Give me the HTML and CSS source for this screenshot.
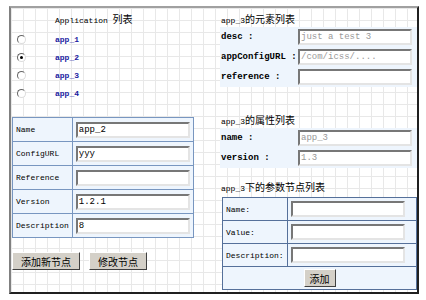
FILE: index.html
```html
<!DOCTYPE html>
<html>
<head>
    <meta charset="UTF-8">
    <title>Application 列表</title>
    <link rel="stylesheet" href="styles.css">
</head>
<body>
    <div class="frame">
        <div class="left">
            <table class="app-list">
                <tr><td class="radio-cell"></td><td class="caption">Application <span class="zh">列表</span></td></tr>
                <tr><td class="radio-cell"><span class="radio"></span></td><td><a class="app-link">app_1</a></td></tr>
                <tr><td class="radio-cell"><span class="radio checked"></span></td><td><a class="app-link">app_2</a></td></tr>
                <tr><td class="radio-cell"><span class="radio"></span></td><td><a class="app-link">app_3</a></td></tr>
                <tr><td class="radio-cell"><span class="radio"></span></td><td><a class="app-link">app_4</a></td></tr>
            </table>

            <table class="edit-table">
                <tr><td class="label">Name</td><td><input class="field" type="text" value="app_2"></td></tr>
                <tr><td class="label">ConfigURL</td><td><input class="field" type="text" value="yyy"></td></tr>
                <tr><td class="label">Reference</td><td><input class="field" type="text" value=""></td></tr>
                <tr><td class="label">Version</td><td><input class="field" type="text" value="1.2.1"></td></tr>
                <tr><td class="label">Description</td><td><input class="field" type="text" value="8"></td></tr>
            </table>

            <div class="buttons">
                <button class="btn wide">添加新节点</button>
                <button class="btn">修改节点</button>
            </div>
        </div>

        <div class="right">
            <div class="title">app_3<span class="zh">的元素列表</span></div>
            <div class="prop-list">
                <div class="prop-row"><span class="prop-label">desc :</span><input class="field ro" type="text" value="just a test 3" readonly></div>
                <div class="prop-row"><span class="prop-label">appConfigURL :</span><input class="field ro" type="text" value="/com/icss/...." readonly></div>
                <div class="prop-row"><span class="prop-label">reference :</span><input class="field ro" type="text" value="" readonly></div>
            </div>

            <div class="title second">app_3<span class="zh">的属性列表</span></div>
            <div class="prop-list">
                <div class="prop-row"><span class="prop-label">name :</span><input class="field ro" type="text" value="app_3" readonly></div>
                <div class="prop-row"><span class="prop-label">version :</span><input class="field ro" type="text" value="1.3" readonly></div>
            </div>

            <div class="title third">app_3<span class="zh">下的参数节点列表</span></div>
            <table class="param-table">
                <tr><td class="label">Name:</td><td><input class="field" type="text"></td></tr>
                <tr><td class="label">Value:</td><td><input class="field" type="text"></td></tr>
                <tr><td class="label">Description:</td><td><input class="field" type="text"></td></tr>
                <tr><td colspan="2" class="center"><button class="btn small">添加</button></td></tr>
            </table>
        </div>
    </div>
</body>
</html>
```

FILE: styles.css
```css
body {
    margin: 0;
    background: #fff;
    font-family: "Liberation Mono", "Noto Sans CJK SC", monospace;
    font-size: 8px;
    color: #000;
}

.frame {
    display: flex;
    margin: 6px 0 0 9px;
    width: 406px;
    height: 284px;
    border-top: 2px solid #a0a0a0;
    border-left: 2px solid #808080;
    border-right: 2px solid #202020;
    border-bottom: 2px solid #202020;
    background-color: #fff;
    background-image:
        linear-gradient(to right, #e8e8e8 1px, transparent 1px),
        linear-gradient(to bottom, #e8e8e8 1px, transparent 1px);
    background-size: 12px 12px;
    overflow: hidden;
}

.zh {
    font-family: "Noto Sans CJK SC", sans-serif;
    font-size: 10px;
}

/* left column */
.left {
    width: 209px;
    padding-top: 4px;
}

.app-list {
    border-collapse: collapse;
}

.app-list td {
    height: 18px;
    padding: 0;
}

.radio-cell {
    width: 38px;
    padding-left: 6px !important;
}

.caption {
    vertical-align: top;
    line-height: 14px;
}

.radio {
    display: block;
    width: 7px;
    height: 7px;
    border-radius: 50%;
    border: 1px solid;
    border-color: #666 #ddd #ddd #666;
    background: #fff;
    position: relative;
}

.radio.checked::after {
    content: "";
    position: absolute;
    left: 2px;
    top: 2px;
    width: 3px;
    height: 3px;
    border-radius: 50%;
    background: #000;
}

.app-link {
    color: #1a1aa0;
    font-weight: bold;
}

.edit-table {
    margin: 15px 0 0 1px;
    border-collapse: collapse;
    background: #eef5fd;
    width: 179px;
}

.edit-table td {
    border: 1px solid #7896c0;
    height: 23px;
    padding: 0 3px;
}

.edit-table .label {
    width: 49px;
}

.field {
    box-sizing: border-box;
    width: 114px;
    height: 16px;
    padding: 0 1px;
    border: 2px solid;
    border-color: #777 #e4e4e4 #e4e4e4 #777;
    background: #fff;
    font-family: "Liberation Mono", monospace;
    font-size: 9px;
    color: #000;
}

.field.ro {
    color: #999;
}

.buttons {
    display: flex;
    gap: 9px;
    margin: 14px 0 0 1px;
}

.btn {
    height: 18px;
    padding: 0 8px;
    background: #d4d0c8;
    border: 1px solid;
    border-color: #fff #404040 #404040 #fff;
    font-family: "Noto Sans CJK SC", sans-serif;
    font-size: 10px;
    color: #000;
}

.btn.wide {
    width: 68px;
}

.btn.small {
    padding: 0 5px;
}

/* right column */
.right {
    flex: 1;
    padding-top: 5px;
}

.title {
    height: 14px;
    line-height: 12px;
    padding-left: 1px;
}

.title.second {
    margin-top: 27px;
}

.title.third {
    margin-top: 13px;
    margin-bottom: 2px;
}

.prop-list {
    background: #eef5fd;
}

.prop-row {
    display: flex;
    align-items: center;
    height: 20px;
    padding-left: 1px;
}

.prop-label {
    width: 77px;
    font-weight: bold;
    font-size: 9px;
}

.param-table {
    margin-left: 2px;
    border-collapse: collapse;
    background: #eef5fd;
    width: 195px;
}

.param-table td {
    border: 1px solid #55709a;
    height: 22px;
    padding: 0 3px;
}

.param-table .label {
    width: 53px;
}

.center {
    text-align: center;
}
```
